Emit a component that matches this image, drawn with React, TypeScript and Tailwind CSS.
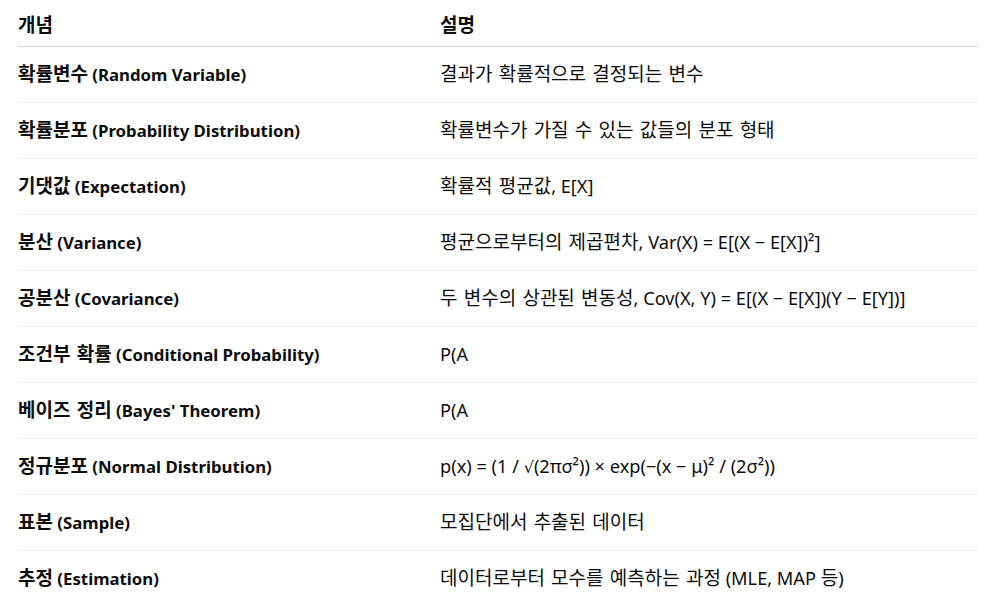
import React from "react";

const HANGUL = /([\u3131-\u318E\uAC00-\uD7A3]+(?: [\u3131-\u318E\uAC00-\uD7A3]+)*)/;

function T({ t }: { t: string }) {
  const parts = t.split(HANGUL);
  return (
    <>
      {parts.map((p, i) =>
        i % 2 === 1 ? (
          <span key={i} className="text-[19px] [word-spacing:1.3px]">
            {p}
          </span>
        ) : (
          <React.Fragment key={i}>{p}</React.Fragment>
        )
      )}
    </>
  );
}

const rows: [string, string][] = [
  ["확률변수 (Random Variable)", "결과가 확률적으로 결정되는 변수"],
  ["확률분포 (Probability Distribution)", "확률변수가 가질 수 있는 값들의 분포 형태"],
  ["기댓값 (Expectation)", "확률적 평균값, E[X]"],
  ["분산 (Variance)", "평균으로부터의 제곱편차, Var(X) = E[(X − E[X])²]"],
  ["공분산 (Covariance)", "두 변수의 상관된 변동성, Cov(X, Y) = E[(X − E[X])(Y − E[Y])]"],
  ["조건부 확률 (Conditional Probability)", "P(A"],
  ["베이즈 정리 (Bayes' Theorem)", "P(A"],
  ["정규분포 (Normal Distribution)", "SQRT"],
  ["표본 (Sample)", "모집단에서 추출된 데이터"],
  ["추정 (Estimation)", "데이터로부터 모수를 예측하는 과정 (MLE, MAP 등)"],
];

export default function App() {
  return (
    <div className="w-[998px] h-[606px] overflow-hidden bg-white text-[#0d0d0d] font-['Noto_Sans','Noto_Sans_CJK_KR',sans-serif]">
      <div className="mx-[18px] w-[960px]">
        <div className="grid grid-cols-[422px_1fr] border-b border-[#d4d4d4] pt-[13px] pb-[8px] leading-6 font-bold text-[16.8px]">
          <div>
            <T t="개념" />
          </div>
          <div>
            <T t="설명" />
          </div>
        </div>
        {rows.map(([a, b], i) => (
          <div
            key={i}
            className="grid grid-cols-[422px_1fr] items-center border-b border-[#ececec] h-14 leading-[23px] whitespace-nowrap"
          >
            <div className="font-bold text-[16.8px]">
              <T t={a} />
            </div>
            <div className="text-[18.2px]">
              {b === "SQRT" ? (
                <>
                  p(x) = (1 / <span className="font-['DejaVu_Sans',sans-serif] text-[16px]">√</span>(2πσ²)) × exp(−(x − μ)² / (2σ²))
                </>
              ) : (
                <T t={b} />
              )}
            </div>
          </div>
        ))}
      </div>
    </div>
  );
}
